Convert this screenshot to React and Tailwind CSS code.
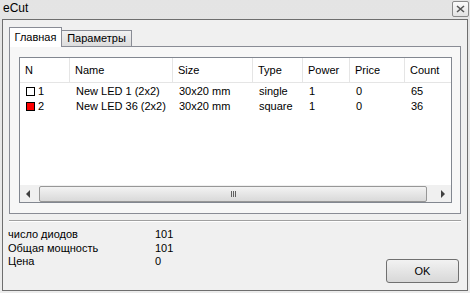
import React from 'react';

const columns = [
    { key: 'n', title: 'N', width: 'w-[50px]' },
    { key: 'name', title: 'Name', width: 'w-[103px]' },
    { key: 'size', title: 'Size', width: 'w-[80px]' },
    { key: 'type', title: 'Type', width: 'w-[50px]' },
    { key: 'power', title: 'Power', width: 'w-[47px]' },
    { key: 'price', title: 'Price', width: 'w-[55px]' },
    { key: 'count', title: 'Count', width: 'w-[46px]' },
];

const rows = [
    { n: 1, color: 'bg-white', name: 'New LED 1 (2x2)', size: '30x20 mm', type: 'single', power: '1', price: '0', count: '65' },
    { n: 2, color: 'bg-[#ff0000]', name: 'New LED 36 (2x2)', size: '30x20 mm', type: 'square', power: '1', price: '0', count: '36' },
];

const stats = [
    ['число диодов', '101'],
    ['Общая мощность', '101'],
    ['Цена', '0'],
];

function Arrow({ dir }) {
    return (
        <svg width="5" height="8" viewBox="0 0 5 8">
            {dir === 'left'
                ? <path d="M4 0 L0 4 L4 8 Z" fill="#404040" />
                : <path d="M1 0 L5 4 L1 8 Z" fill="#404040" />}
        </svg>
    );
}

function ListView() {
    return (
        <div className="flex h-[146px] w-[433px] flex-col border border-[#828790] bg-white">
            <div className="flex h-[25px] shrink-0 border-b border-[#e5e5e5]">
                {columns.map((c, i) => (
                    <div
                        key={c.key}
                        className={`${c.width} flex shrink-0 items-center pl-[5px] ${i < columns.length - 1 ? 'border-r border-[#e5e5e5]' : ''}`}
                    >
                        {c.title}
                    </div>
                ))}
            </div>
            <div className="flex-1 pt-[1px]">
                {rows.map((r) => (
                    <div key={r.n} className="flex h-[15px] items-center">
                        <div className="flex w-[50px] shrink-0 items-center pl-[6px]">
                            <span className={`h-[9px] w-[9px] border border-black ${r.color}`} />
                            <span className="ml-[3px]">{r.n}</span>
                        </div>
                        <div className="w-[103px] shrink-0 pl-[6px]">{r.name}</div>
                        <div className="w-[80px] shrink-0 pl-[6px]">{r.size}</div>
                        <div className="w-[50px] shrink-0 pl-[6px]">{r.type}</div>
                        <div className="w-[47px] shrink-0 pl-[6px]">{r.power}</div>
                        <div className="w-[55px] shrink-0 pl-[6px]">{r.price}</div>
                        <div className="w-[46px] shrink-0 pl-[6px]">{r.count}</div>
                    </div>
                ))}
            </div>
            <div className="flex h-[17px] shrink-0 bg-[#f0f0f0]">
                <div className="flex w-[17px] items-center justify-center"><Arrow dir="left" /></div>
                <div className="flex flex-1 items-center pl-[2px] pr-[7px]">
                    <div className="flex h-[16px] w-full items-center justify-center rounded-[2px] border border-[#979797] bg-gradient-to-b from-[#f3f3f3] to-[#d9d9d9]">
                        <div className="flex gap-[1px]">
                            <span className="h-[6px] w-[1px] bg-[#606060]" />
                            <span className="h-[6px] w-[1px] bg-[#606060]" />
                            <span className="h-[6px] w-[1px] bg-[#606060]" />
                        </div>
                    </div>
                </div>
                <div className="flex w-[17px] items-center justify-center"><Arrow dir="right" /></div>
            </div>
        </div>
    );
}

export default function App() {
    return (
        <div className="flex h-[293px] w-[470px] flex-col overflow-hidden bg-gradient-to-b from-[#e4e4e4] to-[#ececec] font-['Liberation_Sans',sans-serif] text-[11px] text-black">
            <div className="flex h-[19px] shrink-0 items-start justify-between pl-[3px] pr-[1px]">
                <span className="mt-[1px] text-[12px] leading-[14px]">eCut</span>
                <button className="mt-[1px] flex h-[16px] w-[17px] items-center justify-center rounded-[2px] border border-[#8a8a8a] bg-gradient-to-b from-[#fbfbfb] to-[#e2e2e2]">
                    <svg width="9" height="8" viewBox="0 0 9 8">
                        <path d="M1 1 L8 7 M8 1 L1 7" stroke="#555" strokeWidth="1.6" />
                    </svg>
                </button>
            </div>
            <div className="mx-[2px] mb-[2px] flex flex-1 flex-col border border-[#6e6e6e] bg-[#f0f0f0]">
                <div className="ml-[6px] mt-[7px] flex items-end">
                    <div className="relative z-10 -mb-px flex h-[20px] w-[53px] items-center justify-center border border-b-0 border-[#898c95] bg-white">
                        Главная
                    </div>
                    <div className="flex h-[16px] w-[70px] items-center justify-center border border-l-0 border-b-0 border-[#898c95] bg-gradient-to-b from-[#f2f2f2] to-[#dcdcdc]">
                        Параметры
                    </div>
                </div>
                <div className="ml-[6px] h-[168px] w-[452px] shrink-0 border border-[#898c95] bg-[#f7f7f7] pb-[10px] pl-[9px] pt-[10px]">
                    <ListView />
                </div>
                <div className="ml-[6px] mt-[6px] h-[2px] w-[452px] shrink-0 border-b border-t border-b-white border-t-[#a0a0a0]" />
                <div className="flex flex-1 items-start justify-between pb-[7px] pl-[5px] pr-[8px] pt-[6px]">
                    <div className="leading-[13.5px]">
                        {stats.map(([label, value]) => (
                            <div key={label} className="flex">
                                <span className="w-[147px]">{label}</span>
                                <span>{value}</span>
                            </div>
                        ))}
                    </div>
                    <button className="mt-[31px] flex h-[24px] w-[73px] items-center justify-center rounded-[3px] border border-[#707070] bg-gradient-to-b from-[#f2f2f2] to-[#d8d8d8]">
                        OK
                    </button>
                </div>
            </div>
        </div>
    );
}
